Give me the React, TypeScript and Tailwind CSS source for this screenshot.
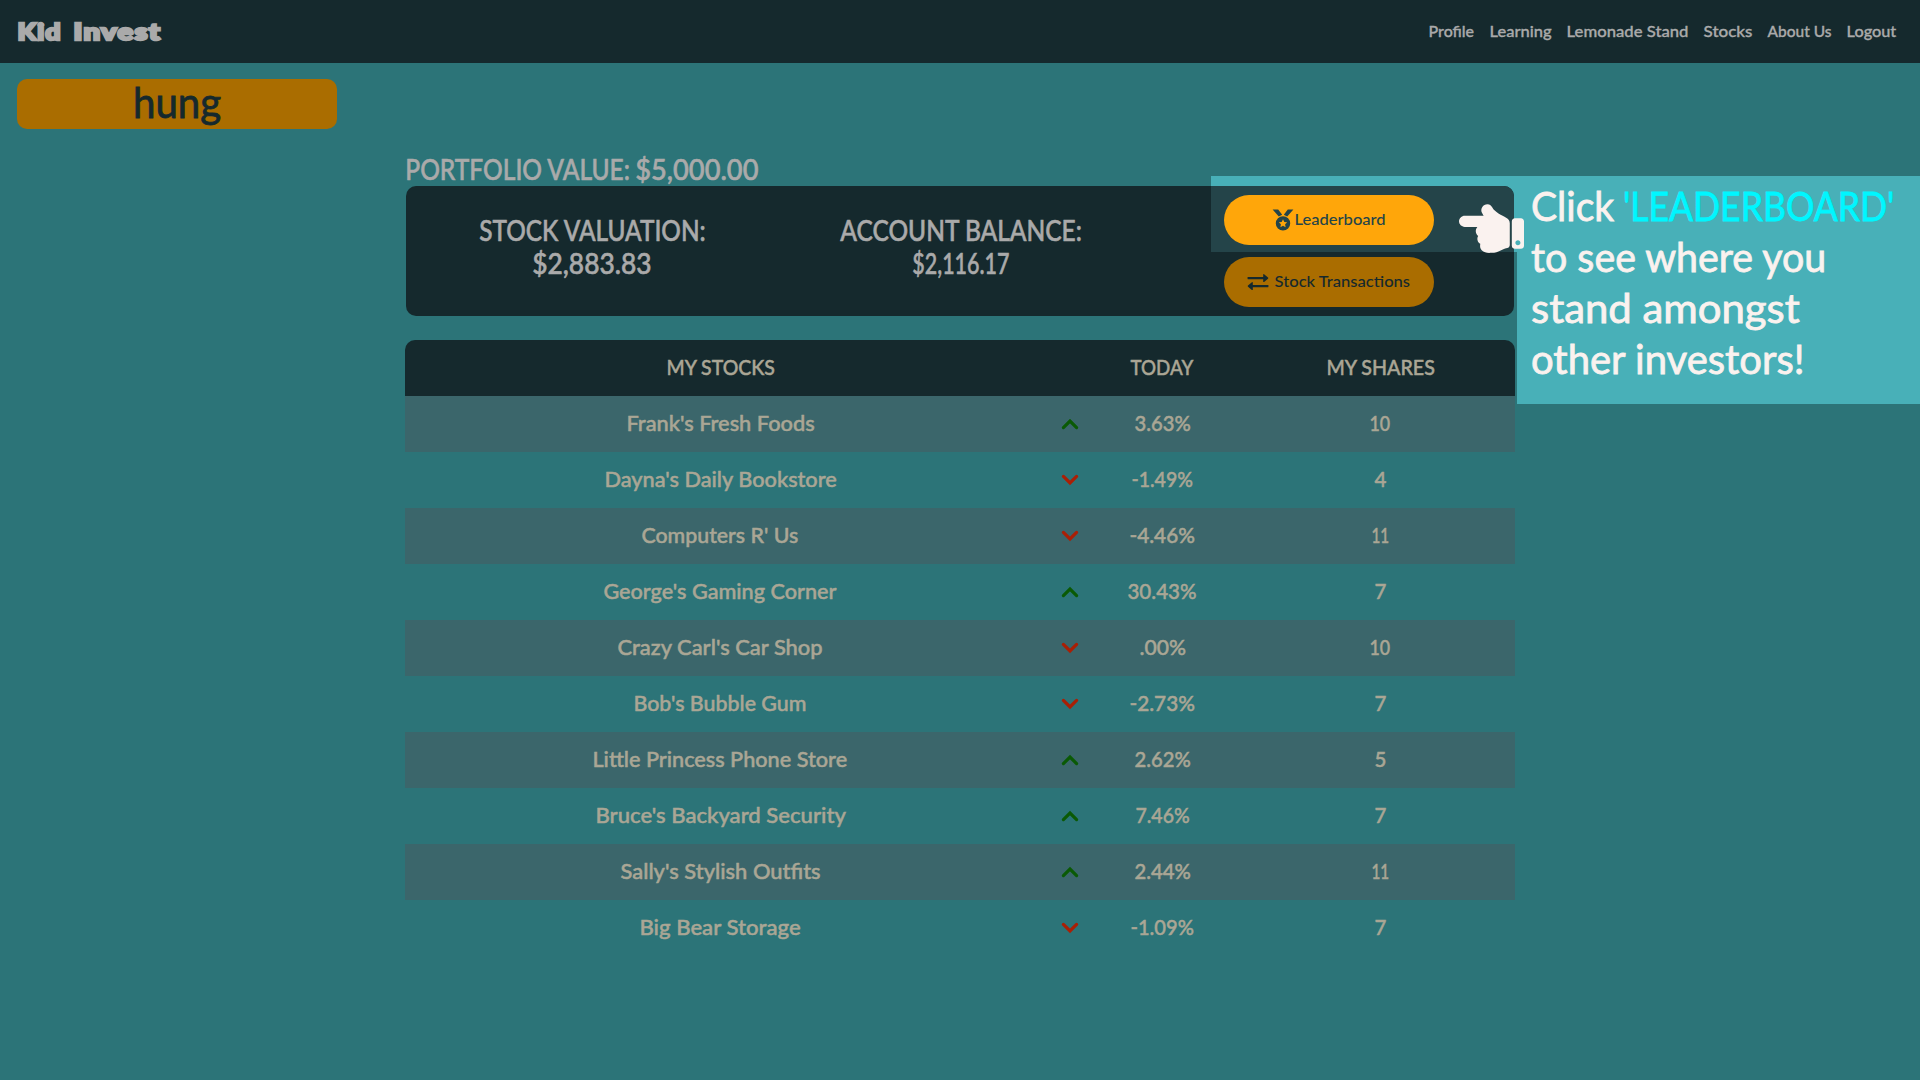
import { useLayoutEffect, useRef, useState } from "react";
import { FaHandPointLeft } from "react-icons/fa";

/** Single line of text whose glyphs are stretched or condensed to fill a given width. */
function Fit({ w, children, className = "" }: { w: number; children: string; className?: string }) {
  const ref = useRef<HTMLSpanElement>(null);
  const [fit, setFit] = useState({ scale: 1, bearing: 0 });
  useLayoutEffect(() => {
    const el = ref.current;
    if (!el) return;
    const bearing = parseFloat(getComputedStyle(el).fontSize) * 0.025;
    setFit({ scale: (w + bearing * 2) / el.offsetWidth, bearing });
  }, [w, children]);
  return (
    <span className={"block whitespace-pre " + className} style={{ width: w }}>
      <span
        ref={ref}
        className="inline-block origin-left"
        style={{ transform: `translateX(${-fit.bearing}px) scaleX(${fit.scale})` }}
      >
        {children}
      </span>
    </span>
  );
}

const links: [string, number][] = [
  ["Profile", 45],
  ["Learning", 61],
  ["Lemonade Stand", 121],
  ["Stocks", 48],
  ["About Us", 63],
  ["Logout", 49],
];

type Row = { name: string; nameW: number; up: boolean; today: string; todayW: number; shares: string; sharesW: number };

const rows: Row[] = [
  { name: "Frank's Fresh Foods", nameW: 187, up: true, today: "3.63%", todayW: 55, shares: "10", sharesW: 20 },
  { name: "Dayna's Daily Bookstore", nameW: 231, up: false, today: "-1.49%", todayW: 60, shares: "4", sharesW: 11 },
  { name: "Computers R' Us", nameW: 156, up: false, today: "-4.46%", todayW: 64, shares: "11", sharesW: 17 },
  { name: "George's Gaming Corner", nameW: 232, up: true, today: "30.43%", todayW: 68, shares: "7", sharesW: 11 },
  { name: "Crazy Carl's Car Shop", nameW: 204, up: false, today: ".00%", todayW: 45, shares: "10", sharesW: 20 },
  { name: "Bob's Bubble Gum", nameW: 172, up: false, today: "-2.73%", todayW: 64, shares: "7", sharesW: 11 },
  { name: "Little Princess Phone Store", nameW: 254, up: true, today: "2.62%", todayW: 55, shares: "5", sharesW: 11 },
  { name: "Bruce's Backyard Security", nameW: 249, up: true, today: "7.46%", todayW: 53, shares: "7", sharesW: 11 },
  { name: "Sally's Stylish Outfits", nameW: 199, up: true, today: "2.44%", todayW: 55, shares: "11", sharesW: 17 },
  { name: "Big Bear Storage", nameW: 160, up: false, today: "-1.09%", todayW: 62, shares: "7", sharesW: 11 },
];

function Chevron({ up }: { up: boolean }) {
  return (
    <svg
      width="18"
      height="12"
      viewBox="0 0 18 12"
      fill="none"
      className={up ? "mt-[3px] text-[#0a5a05]" : "mt-[3px] text-[#aa1f05]"}
    >
      <path
        d={up ? "M2.4 9.6 9 3 15.6 9.6" : "M2.4 2.4 9 9 15.6 2.4"}
        stroke="currentColor"
        strokeWidth="3.2"
        strokeLinecap="round"
      />
    </svg>
  );
}

function Medal() {
  return (
    <svg width="22" height="22" viewBox="0 0 22 22" fill="currentColor">
      <path d="M.6.4h5.6l4 5.4-3.4 1.6zM21.4.4h-5.6l-4 5.4 3.4 1.6z" />
      <path
        fillRule="evenodd"
        d="M11 7.2a7.2 7.2 0 1 1 0 14.4a7.2 7.2 0 0 1 0-14.4zM11 10.2l1.3 2.7 2.9.4-2.1 2 .5 2.9-2.6-1.4-2.6 1.4.5-2.9-2.1-2 2.9-.4z"
      />
    </svg>
  );
}

function Exchange() {
  return (
    <svg width="22" height="16" viewBox="0 0 22 16" fill="currentColor">
      <path d="M.8 3h15.4V.7q0-.9.9-.4l3.9 3.2q.6.6 0 1.2l-3.9 3.2q-.9.4-.9-.5V5.2H.8q-.7-1.1 0-2.2z" />
      <path d="M21.2 11H5.8V8.7q0-.9-.9-.4L1 11.5q-.6.6 0 1.2l3.9 3.2q.9.4.9-.5v-2.2h15.4q.7-1.1 0-2.2z" />
    </svg>
  );
}

export default function App() {
  return (
    <div className="relative h-[1080px] w-[1920px] overflow-hidden bg-[#2c7478] font-['Lato',sans-serif] font-medium text-[#aaaaaa]">
      <header className="flex h-[63px] items-center justify-between bg-[#15292d] pr-6 pl-[18px]">
        <div className="flex gap-[13px] text-[23px] leading-none font-black tracking-[1px] [-webkit-text-stroke:2.4px_#aaaaaa]">
          <Fit w={43}>Kid</Fit>
          <Fit w={87}>Invest</Fit>
        </div>
        <nav className="-mt-[2px] flex gap-4 text-base [-webkit-text-stroke:0.35px_currentColor]">
          {links.map(([label, w]) => (
            <Fit key={label} w={w}>
              {label}
            </Fit>
          ))}
        </nav>
      </header>

      <div className="absolute top-[176px] left-[1211px] h-[76px] w-[306px] bg-[#48b0b8]" />
      <aside className="absolute top-[176px] left-[1517px] flex h-[228px] w-[403px] flex-col bg-[#48b0b8] pt-[5px] pl-[15px] text-[40px] leading-[51px] font-normal text-[#faf2ef] [-webkit-text-stroke:0.8px_currentColor]">
        <div className="flex">
          <Fit w={81}>Click</Fit>
          <Fit w={269} className="ml-[11px] text-[#00f6ff]">'LEADERBOARD'</Fit>
        </div>
        <Fit w={293}>to see where you</Fit>
        <Fit w={267}>stand amongst</Fit>
        <Fit w={272}>other investors!</Fit>
      </aside>

      <div className="mt-4 ml-[17px] flex h-[50px] w-[320px] items-center justify-center rounded-[10px] bg-[#aa6d00] text-[42px] leading-none font-normal text-[#15292d] [-webkit-text-stroke:0.8px_currentColor]">
        <Fit w={86} className="-mt-[4px]">hung</Fit>
      </div>

      <main className="relative mt-[24px] ml-[405px] w-[1110px]">
        <h1 className="flex h-[33px] gap-[7px] pl-[1px] text-[28px] leading-[33px] [-webkit-text-stroke:0.6px_currentColor]">
          <Fit w={223}>PORTFOLIO VALUE:</Fit>
          <Fit w={122}>$5,000.00</Fit>
        </h1>
        <section className="relative mx-[1px] flex h-[130px] overflow-hidden rounded-[10px] bg-[#15292d]">
          <div className="absolute top-0 right-0 h-[66px] w-[303px] bg-[#244449]" />
          <div className="flex w-[372px] flex-col items-center pt-[28px] text-[28px] leading-[33px] [-webkit-text-stroke:0.6px_currentColor]">
            <Fit w={225}>STOCK VALUATION:</Fit>
            <Fit w={118}>$2,883.83</Fit>
          </div>
          <div className="flex w-[366px] flex-col items-center pt-[28px] text-[28px] leading-[33px] [-webkit-text-stroke:0.6px_currentColor]">
            <Fit w={240}>ACCOUNT BALANCE:</Fit>
            <Fit w={96}>$2,116.17</Fit>
          </div>
          <div className="relative ml-[80px] flex flex-col gap-3 pt-[9px] text-base text-[#15292d]">
            <button className="flex h-[50px] w-[210px] items-center justify-center rounded-full bg-[#ffa60a] pr-[2px] text-[#244449]">
              <Medal />
              <Fit w={90} className="-mt-[2px]">Leaderboard</Fit>
            </button>
            <button className="flex h-[50px] w-[210px] items-center justify-center gap-[4px] rounded-full bg-[#aa6d00] pr-[3px]">
              <Exchange />
              <Fit w={135} className="-mt-[2px]">Stock Transactions</Fit>
            </button>
          </div>
        </section>

        <section className="mt-6 overflow-hidden rounded-t-[10px] text-[22px] text-[#aaa695] [-webkit-text-stroke:0.5px_currentColor]">
          <div className="grid h-[56px] grid-cols-[630px_70px_140px_270px] items-center justify-items-center bg-[#15292d] pb-[4px]">
            <Fit w={107}>MY STOCKS</Fit>
            <span />
            <Fit w={62} className="-translate-x-[13px]">TODAY</Fit>
            <Fit w={107}>MY SHARES</Fit>
          </div>
          {rows.map((r) => (
            <div
              key={r.name}
              className="grid h-[56px] grid-cols-[630px_70px_140px_270px] items-center justify-items-center pb-[4px] odd:bg-transparent even:bg-[#3b666b]"
            >
              <Fit w={r.nameW}>{r.name}</Fit>
              <Chevron up={r.up} />
              <Fit w={r.todayW} className="-translate-x-[13px]">{r.today}</Fit>
              <Fit w={r.sharesW}>{r.shares}</Fit>
            </div>
          ))}
        </section>
      </main>

      <FaHandPointLeft size={65} className="absolute top-[196px] left-[1459px] text-[#faf2ef]" />
    </div>
  );
}
